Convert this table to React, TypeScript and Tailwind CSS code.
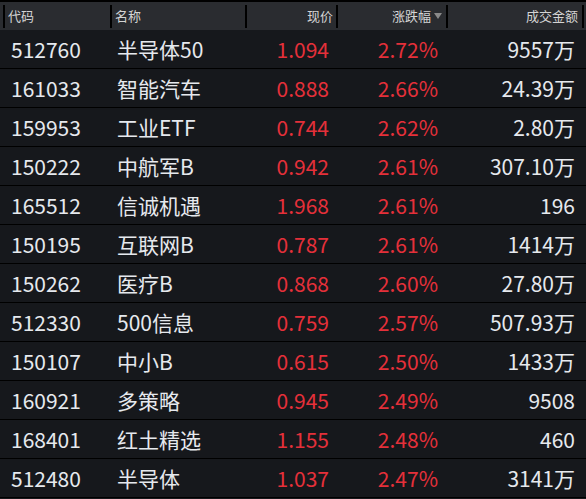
const ROWS = [
  { code: '512760', name: '半导体50', price: '1.094', pct: '2.72%', amount: '9557万' },
  { code: '161033', name: '智能汽车', price: '0.888', pct: '2.66%', amount: '24.39万' },
  { code: '159953', name: '工业ETF', price: '0.744', pct: '2.62%', amount: '2.80万' },
  { code: '150222', name: '中航军B', price: '0.942', pct: '2.61%', amount: '307.10万' },
  { code: '165512', name: '信诚机遇', price: '1.968', pct: '2.61%', amount: '196' },
  { code: '150195', name: '互联网B', price: '0.787', pct: '2.61%', amount: '1414万' },
  { code: '150262', name: '医疗B', price: '0.868', pct: '2.60%', amount: '27.80万' },
  { code: '512330', name: '500信息', price: '0.759', pct: '2.57%', amount: '507.93万' },
  { code: '150107', name: '中小B', price: '0.615', pct: '2.50%', amount: '1433万' },
  { code: '160921', name: '多策略', price: '0.945', pct: '2.49%', amount: '9508' },
  { code: '168401', name: '红土精选', price: '1.155', pct: '2.48%', amount: '460' },
  { code: '512480', name: '半导体', price: '1.037', pct: '2.47%', amount: '3141万' },
]

const FONT = "font-['Noto_Sans_CJK_SC','Noto_Sans',sans-serif]"

export default function App() {
  return (
    <div className={`h-[499px] w-[586px] overflow-hidden bg-[#16181c] ${FONT}`}>
      {/* header */}
      <div className="flex h-[30px] items-center border-t-2 border-black bg-[#2a2c30] text-[13px] text-[#d4d4d4]">
        <div className="w-[3px]" />
        <div className="flex h-[23px] w-[107px] items-center border-l-2 border-black pl-[3px]">代码</div>
        <div className="flex h-[23px] w-[135px] items-center border-l-2 border-black pl-[3px]">名称</div>
        <div className="flex h-[23px] w-[91px] items-center justify-end border-l-2 border-black pr-[3px]">现价</div>
        <div className="flex h-[23px] w-[110px] items-center justify-end border-l-2 border-black pr-[4px]">
          <span>涨跌幅</span>
          <svg width="8" height="6" viewBox="0 0 8 6" className="ml-[3px]">
            <polygon points="0,0 8,0 4,6" fill="#8a8a8a" />
          </svg>
        </div>
        <div className="flex h-[23px] w-[136px] items-center justify-end border-l-2 border-black pr-[4px]">成交金额</div>
        <div className="h-[23px] flex-1 border-l-2 border-black" />
      </div>

      {/* rows */}
      {ROWS.map((r) => (
        <div
          key={r.code}
          className="flex h-[39px] items-center border-b border-black text-[21px] leading-none"
        >
          <div className="w-[110px] pl-[11px] text-[#e6e9ee]">{r.code}</div>
          <div className="w-[135px] pl-[7px] text-[#e6e9ee]">{r.name}</div>
          <div className="w-[91px] pr-[7px] text-right text-[#e5303a]">{r.price}</div>
          <div className="w-[110px] pr-[8px] text-right text-[#e5303a]">{r.pct}</div>
          <div className="w-[136px] pr-[7px] text-right text-[#e6e9ee]">{r.amount}</div>
        </div>
      ))}
    </div>
  )
}
